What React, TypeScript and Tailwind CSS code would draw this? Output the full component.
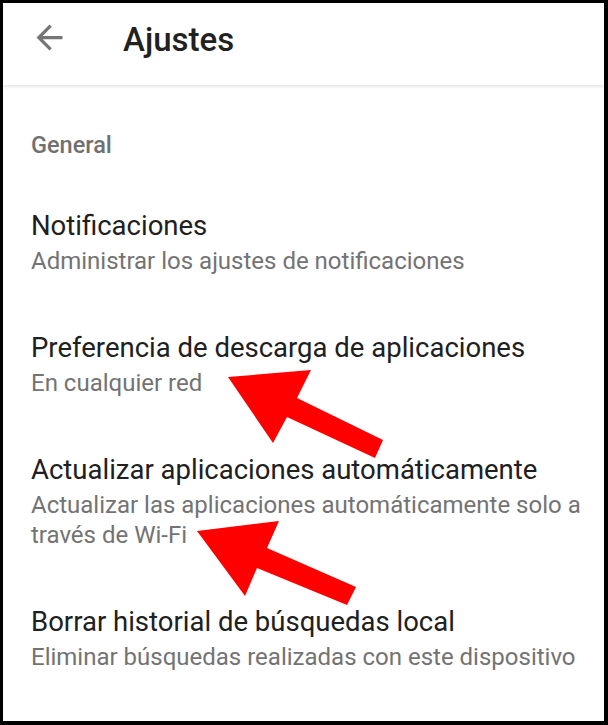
import React from "react";

const items = [
  { title: "Notificaciones", sub: "Administrar los ajustes de notificaciones" },
  { title: "Preferencia de descarga de aplicaciones", sub: "En cualquier red" },
  {
    title: "Actualizar aplicaciones automáticamente",
    sub: "Actualizar las aplicaciones automáticamente solo a través de Wi-Fi",
  },
  { title: "Borrar historial de búsquedas local", sub: "Eliminar búsquedas realizadas con este dispositivo" },
];

export default function App() {
  return (
    <div
      className="relative w-[608px] h-[725px] bg-black pt-[3px] pl-[3px] pr-[4px] pb-[4px] overflow-hidden"
      style={{ fontFamily: "Roboto, 'Noto Sans', sans-serif" }}
    >
      <div className="w-full h-full bg-white flex flex-col">
        <div className="h-[82px] flex items-start bg-white shadow-[0_2px_3px_rgba(0,0,0,0.10)] relative z-10">
          <svg width="39" height="39" viewBox="0 0 24 24" className="ml-[27px] mt-[15px]" fill="#757575">
            <path d="M20 11H7.83l5.59-5.59L12 4l-8 8 8 8 1.41-1.41L7.83 13H20v-2z" />
          </svg>
          <div className="ml-[54px] mt-[20px] text-[33px] font-medium text-[#212121] leading-none">Ajustes</div>
        </div>
        <div className="pl-[28px] pr-[10px]">
          <div className="mt-[46px] text-[23.5px] font-medium text-[#707070] leading-[28px]">General</div>
          <div className="mt-[48px] flex flex-col">
            {items.map((it, i) => (
              <div key={i} className={i === 0 ? "" : "mt-[53px]"}>
                <div className="text-[27.5px] text-[#202020] leading-[38px]">{it.title}</div>
                <div className="mt-[1px] text-[24px] text-[#737373] leading-[30px]">{it.sub}</div>
              </div>
            ))}
          </div>
        </div>
      </div>
      <svg
        className="absolute left-0 top-0 pointer-events-none"
        width="608"
        height="725"
        viewBox="0 0 608 725"
      >
        <polygon
          fill="#ff0000"
          points="228,377 311,370 297,398 383,440 375,458 287,417 273,443"
        />
        <polygon
          fill="#ff0000"
          points="197,531 279,521 267,548 356,587 347,605 257,568 245,596"
        />
      </svg>
    </div>
  );
}
